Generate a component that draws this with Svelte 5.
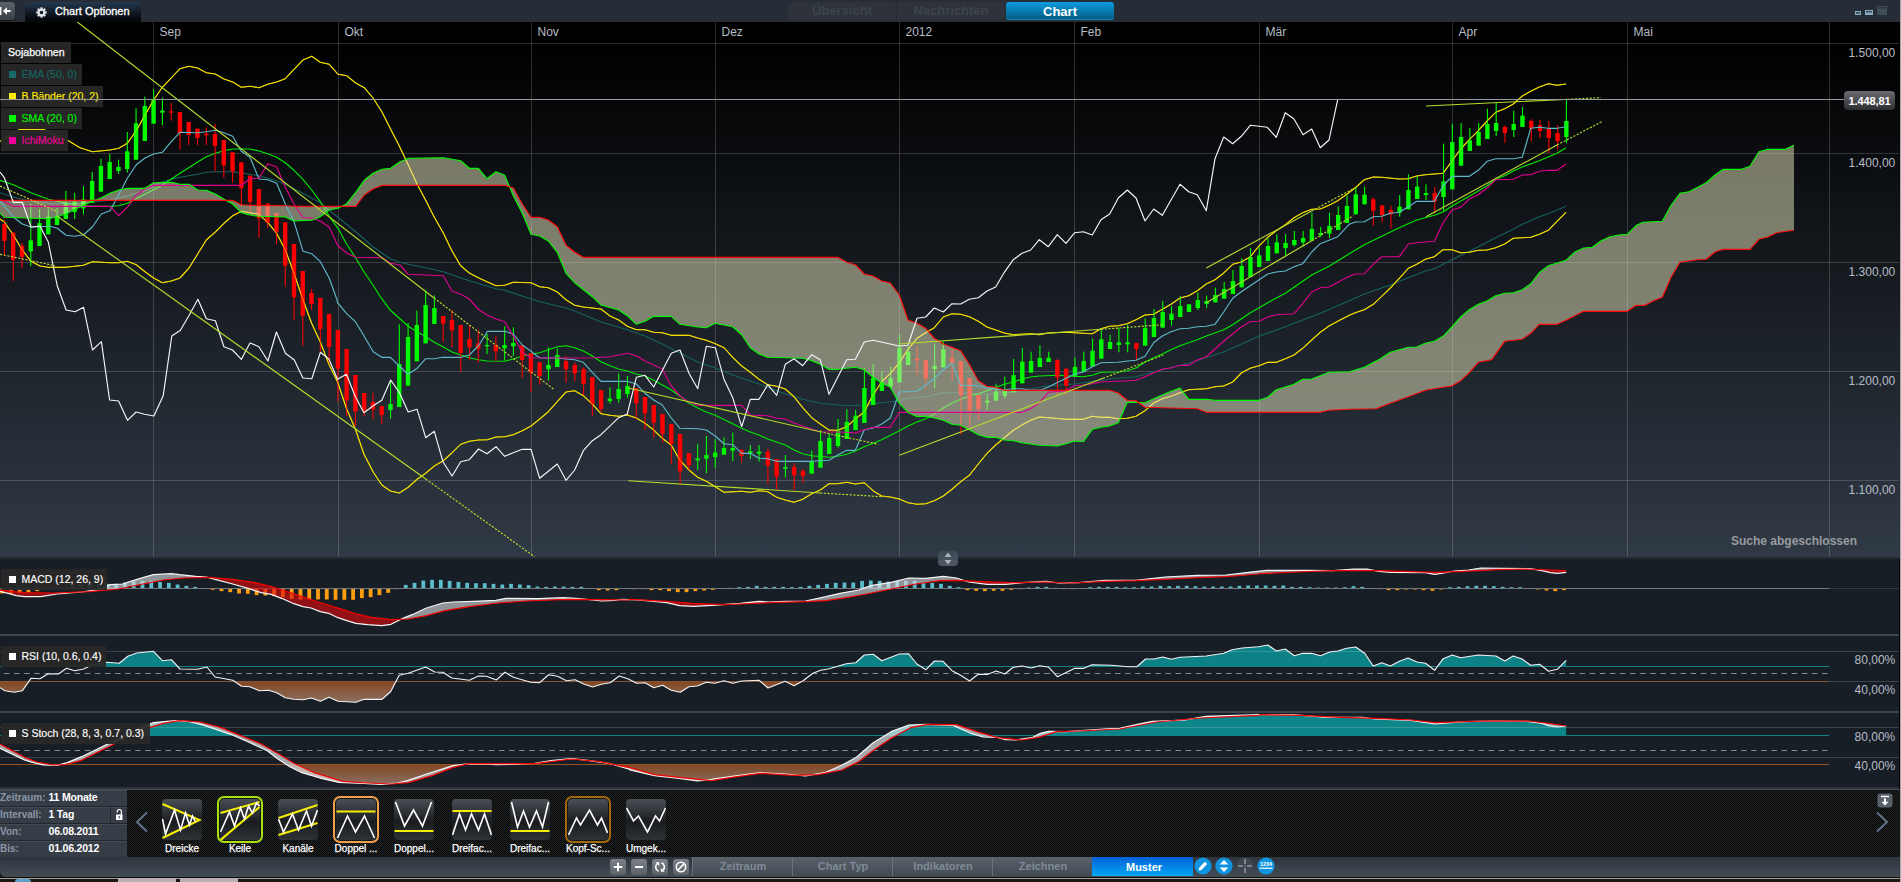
<script>
  // Plot sections: left edge, top edge, horizontal units per pixel (vertical is always 3).
  const sections = {
    A: [0, 0, 3], B: [400, 100, 3], C: [0, 200, 2.8], D: [850, 180, 3], E: [1150, 60, 3], F: [1500, 0, 3],
    G: [0, 540, 2.45], H: [630, 540, 2.45], I: [1260, 540, 2.446]
  };
  const trace = (parts) =>
    Object.entries(parts)
      .flatMap(([k, s]) => {
        const [ox, oy, sx] = sections[k];
        return s.trim().split(/\s+/).map((p) => {
          const [x, y] = p.split(',').map(Number);
          return [+(ox + x / sx).toFixed(1), +(oy + y / 3).toFixed(1)];
        });
      });
  const line = (pts) => 'M' + pts.map((p) => p.join(' ')).join('L');
  const closeTo = (pts, y) => line(pts) + `L${pts[pts.length - 1][0]} ${y}L${pts[0][0]} ${y}Z`;
  const barX = (i) => 4.4 + 8.775 * i;

  const upperBand = trace({
    A: '0,424 20,412 60,388 130,388 205,422 240,443 277,455 330,450 356,445 382,430 410,390 435,345 461,300 487,262 540,206 567,199 593,204 619,218 646,222 672,237 698,246 724,262 750,259 777,263 803,253 830,246 856,236 882,208 909,180 935,169 961,187 988,193 1014,223 1040,227 1067,249 1093,263 1119,294 1146,336 1172,388 1198,438',
    B: '25,195 51,252 77,301 103,352 130,399 156,453 182,497 208,519 235,533 261,545 288,557 314,556 340,547 393,548 419,560 445,563 472,576 498,599 524,616 550,621 603,627 630,648 656,660 682,679 709,689 735,689 761,697 787,698 814,706 867,706 893,714 919,721 946,731 972,743 998,772 1025,798 1051,817 1077,838 1103,854 1130,859 1156,867 1182,890 1208,923 1235,953 1261,972 1287,990 1313,991 1340,980 1366,957 1393,935 1419,885 1445,845 1471,821',
    D: '148,548 174,508 201,475 227,458 253,443 280,411 306,401 332,403 358,410 385,424 411,441 437,450 463,459 490,464 542,461 568,464 595,459 648,457 700,460 727,461 753,446 779,439 805,437 832,431 858,419 885,405 911,403 937,388 963,373 990,354 1016,347 1042,332 1069,312 1095,299 1121,279 1148,253 1174,246 1200,231 1227,198 1253,172 1279,152 1306,134 1332,113 1358,98 1385,88 1411,87 1437,76 1463,62 1490,43',
    E: '616,383 643,359 670,351 695,352 748,357 775,356 800,348 826,344 879,340 906,303 932,267 958,239 985,212 1011,183 1037,157 1064,146 1090,132 1117,108 1142,94 1168,81 1195,71 1221,76 1248,72'
  });
  const lowerBand = trace({
    A: '0,657 13,666 40,705 67,750 93,784 120,798 145,802 198,802 250,796 277,785 330,788 356,788 382,784 409,794 435,815 461,834 487,848 514,843 540,834 567,804 593,762 619,720 646,696 672,670 698,647 724,634 750,638 777,643 803,667 830,700 856,750 882,820 909,899',
    C: '872,368 897,427 921,493 945,545 970,625 995,688 1019,762 1045,816 1069,855 1093,873 1118,879 1143,862 1168,838 1192,820 1216,798 1240,783 1266,758 1290,733 1314,724 1340,720 1365,719',
    B: '288,1011 314,1010 340,1004 367,992 393,978 419,957 445,935 472,905 498,876 524,872 550,887 577,912 603,941 630,946 656,949 682,945 709,954 735,970 761,990 787,1015 814,1036 840,1081 867,1110 893,1132 919,1144 946,1160 972,1177 1025,1174 1051,1177 1077,1172 1103,1175 1130,1192 1156,1200 1182,1207 1208,1198 1235,1181 1261,1170 1287,1151 1313,1151 1340,1147 1366,1152 1393,1148 1419,1172 1445,1188 1471,1191 1498,1197',
    D: '174,968 201,973 227,971 253,962 280,948 306,928 332,905 358,886 385,852 411,820 437,795 463,773 490,751 516,735 542,721 568,711 595,713 648,718 700,718 727,709 753,712 779,712 805,716 832,715 858,709 885,692 911,669 937,656 963,649 990,638 1016,629 1069,626 1095,620 1121,618 1148,606 1174,579 1200,565 1227,557 1253,547 1279,547 1306,536 1332,525 1358,505 1385,480 1411,457 1437,438 1463,424 1498,406',
    E: '616,758 643,749 670,733 695,709 721,684 748,655 775,625 800,613 826,598 853,590 879,569 906,569 932,578 958,577 985,571 1011,570 1037,563 1064,552 1090,535 1117,533 1142,532 1168,523 1195,511 1221,484 1248,457'
  });
  const ema = trace({
    A: '0,578 40,591 67,598 93,602 160,612 250,610 330,600 382,588 435,572 461,558 487,545 540,532 593,523 619,517 646,515 698,515 724,519 777,527 830,542 856,553 909,580 961,608 1014,652 1067,695 1119,740 1172,777 1198,786',
    B: '25,493 77,503 130,515 208,542 288,566 314,571 419,605 498,624 524,633 603,666 682,689 735,708 787,732 840,759 893,786 946,804 998,825 1077,852 1156,882 1208,898 1261,910 1340,917 1393,915 1445,908 1498,902',
    D: '174,655 227,650 280,638 332,638 400,643 450,640 490,635 590,618 674,612 779,597 858,590 911,575 1016,550 1121,516 1227,469 1306,440 1411,400 1498,362',
    E: '643,702 721,675 775,653 826,633 853,626 906,599 985,560 1037,533 1090,508 1117,493 1168,470 1195,461 1248,439'
  });
  const sma = trace({
    A: '0,541 40,554 93,578 145,598 198,609 225,615 277,619 330,619 356,617 382,610 435,583 487,555 540,520 593,486 619,470 646,460 672,452 698,447 750,447 777,453 803,461 830,472 856,488 882,511 909,538 935,570 961,605 988,649 1014,685 1040,733 1067,774 1093,817 1119,855 1140,889',
    C: '1069,296 1093,331 1118,355 1143,379 1168,395 1192,410 1216,427 1240,440 1266,456 1290,465 1314,473 1340,479',
    B: '261,783 314,784 340,777 367,768 393,763 419,758 445,749 472,740 498,737 524,743 550,753 577,768 603,785 630,797 656,807 682,813 709,822 735,828 761,841 787,855 814,870 840,889 867,910 893,924 919,936 946,946 1025,985 1051,996 1077,1005 1103,1017 1156,1035 1182,1050 1208,1061 1235,1067 1287,1072 1313,1069 1340,1063 1366,1053 1393,1040 1445,1019 1498,992',
    D: '174,738 201,726 227,716 253,702 280,684 306,669 332,658 358,649 385,641 411,632 437,622 463,613 490,606 516,597 542,591 568,588 622,586 700,590 727,586 753,577 805,576 832,572 858,564 885,546 911,533 937,522 963,509 990,497 1042,479 1069,468 1121,449 1148,434 1200,399 1253,368 1306,340 1332,322 1385,285 1437,259 1498,221',
    E: '643,554 695,529 748,503 775,491 800,480 853,466 879,456 906,438 958,409 1011,377 1037,358 1064,347 1090,333 1117,321 1168,302 1221,280 1248,263'
  });
  const tenkan = trace({
    A: '0,604 13,618 40,651 67,672 93,681 150,679 172,685 198,706 225,709 251,704 277,681 304,642 330,632 356,585 382,535 409,494 435,474 461,462 487,457 514,425 540,397 593,398 619,395 646,391 672,398 698,409 724,454 750,472 777,537 803,539 830,550 856,612 882,665 909,754 935,761 961,785 988,835 1011,899',
    C: '945,308 970,340 995,365 1019,407 1045,455 1069,472 1093,472 1118,498 1143,523 1168,505 1192,476 1216,476 1240,472 1290,472 1314,465 1340,437 1365,394 1414,394',
    B: '340,702 367,735 393,754 419,774 472,774 498,777 524,779 550,787 577,817 603,844 682,844 709,852 735,880 761,900 787,915 814,954 840,985 893,986 919,990 946,1008 972,1031 998,1034 1025,1060 1051,1060 1077,1075 1103,1076 1130,1084 1235,1084 1287,1081 1313,1065 1340,1051 1366,1051 1393,989 1419,984 1445,972 1471,954 1498,876',
    D: '201,634 227,615 253,596 280,569 306,549 332,616 385,617 411,624 463,629 490,626 516,626 542,631 575,629 595,621 648,595 674,582 700,576 727,560 753,548 805,547 832,543 858,541 885,529 911,488 937,468 963,455 990,446 1016,445 1042,440 1069,439 1095,433 1121,396 1148,355 1174,335 1253,282 1279,276 1306,273 1332,260 1358,251 1385,216 1411,191 1437,181 1463,170 1498,133',
    E: '616,486 643,485 670,470 695,469 721,460 748,457 775,440 800,424 853,424 879,378 906,349 958,349 985,331 1011,304 1037,296 1090,296 1117,292 1142,205 1168,202 1195,205 1221,205 1248,200'
  });
  const kijun = trace({
    A: '0,598 40,619 330,619 356,647 382,622 409,585 435,567 461,556 724,556 750,536 777,535 803,491 830,501 856,562 882,612 909,653 935,654 961,663 988,682 1014,738 1040,759 1067,772 1146,773 1172,790 1200,795',
    B: '25,523 130,527 156,573 182,583 208,597 235,628 261,645 288,657 314,665 340,708 367,757 393,773 550,774 577,773 630,770 656,765 682,760 709,767 735,783 761,795 787,807 814,858 840,888 867,907 893,916 1025,916 1051,945 1103,947 1130,955 1156,957 1182,969 1235,987 1261,995 1340,997 1366,999 1393,989 1419,982 1471,982 1498,937',
    D: '516,697 542,686 568,668 595,637 648,632 674,617 700,615 727,611 753,606 832,602 858,601 885,590 911,578 937,567 963,564 990,556 1016,556 1042,540 1069,530 1121,484 1174,441 1200,425 1227,424 1253,411 1279,404 1332,401 1358,371 1385,336 1411,323 1437,321 1498,289',
    E: '616,642 643,641 670,613 695,590 748,590 775,552 800,548 853,544 879,489 906,450 932,442 958,417 985,404 1011,384 1037,359 1090,358 1117,345 1142,344 1168,334 1195,331 1221,331 1248,312'
  });
  const chikou = trace({
    A: '0,516 13,533 40,607 67,607 93,681 120,679 145,726 160,800 172,858',
    C: '185,330 210,335 234,322 259,450 284,425 307,600 332,603 357,661 381,636 405,643 431,648 457,587 481,408 505,391 530,345 554,298 578,356 603,362 627,440 651,450 676,478 700,429 725,440 750,483 774,396 799,460 824,480 848,534 873,536 897,457 921,477 945,538 970,523 995,590 1019,638 1045,617 1069,601 1094,540 1118,577 1143,636 1168,628 1192,713 1216,694 1240,785 1266,828 1290,785 1314,779 1340,747',
    B: '261,1061 288,1040 314,1069 340,1058 367,1048 393,1048 419,1135 472,1092 498,1141 524,1110 550,1052 577,1022 603,1004 656,953 682,942 709,832 735,826 761,861 814,760 840,750 867,820 893,866 919,739 946,743 972,838 998,893 1025,980 1051,898 1077,898 1103,854 1130,886 1156,793 1182,776 1208,797 1235,764 1261,779 1287,883 1340,779 1366,778 1393,726 1419,721 1498,738',
    D: '174,496 201,415 227,411 253,384 280,396 306,371 332,372 358,358 385,353 411,333 437,321 463,277 490,239 516,220 542,210 568,179 595,200 622,164 648,190 674,158 700,155 727,165 753,119 779,102 805,54 832,30 858,54 885,123 911,87 937,106 990,13 1016,35 1042,44 1069,92',
    E: '195,296 221,231 248,251 274,229 301,196 352,202 379,232 406,158 432,177 459,224 485,207 511,263 537,240 563,119'
  });
  const spanA = trace({
    A: '0,639 13,652 145,656 172,650 198,641 225,628 251,615 277,604 304,593 330,580 356,570 382,565 435,565 461,548 514,547 540,553 567,553 593,570 619,571 646,582 672,598 698,612 724,638 750,645 777,649 856,651 882,663 935,661 961,650 988,630 1014,625 1040,611 1067,577 1093,541 1119,520 1146,508 1172,505 1198,487',
    B: '25,175 130,173 182,182 208,205 235,205 261,236 288,215 314,226 340,287 367,340 393,403 419,408 445,423 472,457 498,520 524,548 577,590 603,615 656,630 682,647 709,673 735,664 761,649 814,649 840,673 893,681 919,683 946,670 998,680 1025,704 1051,743 1077,762 1103,772 1208,775 1235,782 1261,793 1287,808 1313,808 1366,802 1393,809 1419,832 1445,848 1471,862',
    D: '148,670 174,697 201,710 227,709 253,714 280,721 306,733 332,736 358,749 385,764 411,772 437,772 463,780 490,782 516,788 568,796 622,798 648,791 674,783 700,785 727,748 753,742 779,738 805,728 832,667 885,668 911,656 937,645 963,634 990,624 1016,658 1069,658 1095,661 1227,661 1253,652 1279,629 1306,621 1332,613 1358,598 1385,597 1411,587 1437,577 1498,575',
    E: '643,922 690,897 721,877 775,862 800,861 826,850 853,844 879,829 906,801 932,771 958,749 985,733 1011,723 1037,707 1064,700 1090,698 1117,689 1142,672 1168,638 1195,617 1248,601',
    F: '225,756 251,744 277,742 304,722 330,710 356,705 382,703 409,676 430,667 487,664 514,615 540,580 567,575 593,562 619,548 646,524 670,508 724,508 750,499 777,455 803,448 856,448 882,436'
  });
  const spanB = trace({
    A: '0,601 698,601 724,614 750,616 860,617 882,619 1067,619 1093,585 1119,567 1146,556 1200,556',
    B: '314,256 340,264 367,312 393,352 419,352 445,360 472,380 498,436 524,457 550,472 1313,472 1340,487 1366,494 1393,522 1419,528 1445,543 1471,549 1498,585',
    D: '174,420 201,430 227,445 253,475 280,492 306,502 332,512 358,553 385,602 411,619 437,622 463,631 779,631 805,639 832,661 858,662 885,682 1042,686 1069,697 1411,697 1437,691 1498,688',
    E: '678,1046 721,1030 775,1010 826,991 879,982 906,978 932,962 958,938 985,907 1025,899 1064,844 1117,838 1142,820 1168,793 1221,793 1248,781',
    F: '251,934 382,934 409,916 435,916 461,902 487,892 514,830 540,787 593,779 619,778 646,755 670,748 750,748 777,718 803,711 830,698 882,691'
  });
  const cloud = line([...spanA, ...[...spanB].reverse()]) + 'Z';

  // Candles: direction, body top, body bottom, high, low, listed per section from its first bar.
  const candleSets = [
    [0, 0, 'r672,723,660,768 r698,779,696,843 r738,771,729,804 g721,754,612,798 g669,738,627,738 g650,703,627,703 g648,675,624,675 g610,657,573,657 g606,636,579,657 g598,625,558,643 g543,608,516,608 g498,575,476,575 g486,537,462,537 g501,513,479,522 g454,507,396,518 g370,479,325,479 g318,423,290,423 g298,371,268,371 g332,338,293,375 r334,338,309,362 r336,400,336,449 r366,405,366,435 r386,414,386,435 r401,406,382,435 r402,438,372,514 r420,496,420,533 r457,514,457,548 r487,565,487,618 r527,606,527,637 r567,655,567,713 r611,668,611,683 r639,697,639,733 r667,797,667,860'],
    [33, 200, 'r132,292,132,360 r213,347,213,437 r279,312,267,330 r294,388,294,455 r342,441,342,490 r390,506,390,604 r447,601,447,648 r525,634,525,678 r579,633,579,648 r606,628,579,657 r618,645,618,671 g612,630,542,656 g492,621,373,621 g411,557,369,557 g375,484,332,484 g315,430,271,430 g324,372,286,372 r348,371,348,426 r360,391,330,443 r375,459,375,515 r417,442,375,480 r430,447,390,488'],
    [55, 100, 'g735,739,702,762 r735,754,709,783 g735,745,679,781 g729,739,682,768 r736,780,736,833 r760,819,760,875 r787,828,787,854 g795,808,742,842 g765,801,745,801 r783,808,768,848 r795,820,787,843 r807,852,802,885 r831,912,831,947 r870,927,870,938 g896,903,862,911 g867,897,820,908 g858,882,828,893 r864,910,864,958 r891,940,891,990 r915,968,915,1014 r942,1002,942,1028 r972,1032,972,1091 r1002,1114,1002,1151 r1059,1096,1059,1110 g1075,1081,1032,1110 g1065,1076,1008,1120 g1058,1071,1018,1103 g1044,1064,1012,1064 g1044,1052,998,1083 r1049,1068,1049,1088 g1054,1060,1035,1077 g1055,1061,1035,1085 r1055,1097,1046,1153 r1077,1130,1077,1169 g1101,1106,1065,1132 r1101,1126,1090,1170 r1113,1128,1106,1149 g1083,1121,1052,1121 g1023,1103,990,1103 g1014,1062,1000,1062 g992,1038,957,1043 g966,1017,928,1017 g947,990,930,990 g864,969,804,969 g834,915,792,915 g847,873,813,873 g835,860,799,866'],
    [102, 180, 'g503,607,464,607 g515,555,500,555 r535,542,499,585 r540,595,540,627 g558,567,491,624 g508,562,485,562 r535,550,505,602 r543,645,543,764 r594,691,594,740 r645,687,645,720 g662,668,643,690 g635,662,611,662 g630,648,590,655 g585,637,537,637 g545,610,504,610 g543,578,515,578 g534,561,496,561 g533,546,515,546 r540,593,537,645 r566,617,566,645 g561,590,533,590 g543,576,515,576 g512,560,476,560 g478,536,446,536 g486,507,464,507 g487,495,443,517 g487,493,435,517 r489,507,489,540 g444,497,415,497 g414,471,387,471 g396,443,363,443 g401,420,378,437 g378,411,348,411 g373,396,373,396 g360,384,338,390 g363,372,347,384 g345,367,323,367 g327,356,306,356 g303,342,270,342 g258,322,235,322 g231,291,204,291 g226,261,203,261 g198,243,174,243 g187,220,163,220 g189,204,162,228 g180,195,153,200 g174,187,153,200 g147,182,98,182 g159,165,141,171 g138,161,98,174 g105,150,79,150 g78,129,46,129'],
    [154, 60, 'g403,463,382,463 g404,433,380,433 r418,452,412,496 r436,465,436,486 r450,463,437,506 g440,458,405,470 g390,448,343,448 g380,417,349,417 g399,405,373,420 r399,424,381,461 g364,411,251,453 g246,388,192,388 g231,317,189,317 g241,273,204,273 g216,257,189,257 g192,237,146,237 g189,213,128,228 r201,219,196,249 g192,210,152,231 g167,201,141,201 r183,206,178,243 r196,213,180,234 r207,234,183,279 r219,243,195,268 g183,231,118,250']
  ];
  const candles = candleSets.flatMap(([first, top, s]) =>
    s.split(' ').map((c, k) => {
      const [bt, bb, hi, lo] = c.slice(1).split(',').map((v) => top + v / 3);
      return { x: barX(first + k), up: c[0] === 'g', bt, bb, hi, lo };
    })
  );

  // Trend lines: start, end of the solid part, end of the dashed projection.
  const trends = [
    [77.3, 22, 434, 298, 554, 389.5],
    [57, 216, 425.7, 479, 534.6, 556.7],
    [628.3, 388, 820, 431.7, 878.3, 444.3],
    [628.3, 480.7, 820, 493, 881.7, 496.7],
    [899.3, 344, 1101, 329.3, 1164, 324.7],
    [899.3, 455.3, 1103, 378.3, 1163.3, 355],
    [1206.3, 268, 1311.7, 211, 1355, 187.7],
    [1206.3, 302.7, 1311.7, 240.7, 1353.3, 215.7],
    [1426, 106, 1560, 99.7, 1601, 97.7],
    [1426, 216.7, 1557, 145, 1603, 121]
  ];

  const months = [['Sep', 153.5], ['Okt', 338.5], ['Nov', 531.5], ['Dez', 715.5], ['2012', 899.5], ['Feb', 1074.5], ['Mär', 1259.5], ['Apr', 1452.5], ['Mai', 1627.5], ['', 1829.5]];
  const prices = [['1.500,00', 43.5], ['1.400,00', 153.5], ['1.300,00', 262.5], ['1.200,00', 371.5], ['1.100,00', 480.5]];

  const histogram = [-14, -15, -13, -11, -7, -3, 0, 3, 6, 9, 10, 11, 13, 13, 17, 20, 22, 22, 19, 16, 11, 7, 4, 0, -3, -7, -10, -14, -15, -19, -20, -22, -25, -30, -32, -32, -32, -32, -33, -33, -33, -28, -25, -19, -12, -1, 10, 16, 23, 25, 25, 22, 19, 16, 15, 15, 13, 11, 13, 11, 9, 5, 4, 5, 5, 4, 4, 0, -4, -5, -4, 0, -1, -1, -4, -4, -7, -10, -10, -7, -5, -3, 0, 1, 3, 4, 7, 4, 4, 4, 3, 4, 7, 10, 13, 16, 17, 17, 22, 23, 22, 20, 22, 22, 22, 17, 16, 13, 7, 3, -4, -6, -7, -6, -6, -3, -1, 2, 4, 4, 1, -1, -1, 0, 3, 4, 4, 4, 3, 3, 5, 5, 7, 6, 7, 7, 6, 5, 5, 5, 5, 7, 8, 8, 8, 7, 8, 4, 4, 3, 2, 2, 2, 3, 6, 4, 0, -1, -4, -4, -2, -2, -4, -6, -2, 3, 4, 6, 7, 7, 6, 4, 3, 3, 0, -2, -5, -7, -4];
  const macd = trace({
    G: '0,154 20,160 40,167 60,170 100,170 140,162 200,156 240,149 270,134 300,132 320,124 350,113 376,104 420,101 440,104 480,109 505,111 527,118 570,132 610,146 640,158 665,163 690,175 720,191 742,200 762,204 785,215 805,220 828,233 850,242 872,250 900,254 935,257 958,253 985,236 1010,224 1045,204 1085,189 1110,186 1160,184 1215,181 1240,175 1320,176 1380,173 1420,176 1475,183 1505,181 1525,178 1560,180',
    H: '40,182 90,188 122,197 155,199 200,196 270,190 315,184 340,186 380,184 430,183 480,170 515,160 560,150 590,137 640,127 683,114 725,115 768,109 800,114 830,126 875,133 920,133 960,128 1020,124 1050,129 1100,128 1165,121 1240,121 1310,111 1390,106 1460,105 1515,97 1560,91',
    I: '30,91 110,91 180,92 230,87 262,87 290,94 320,97 405,98 427,103 450,99 475,93 510,90 540,84 660,86 690,92 710,98 728,100 749,97'
  });
  const signal = trace({
    G: '0,150 60,158 130,159 220,155 290,147 350,132 400,120 450,114 510,112 570,118 620,127 665,140 700,153 740,170 780,186 830,205 870,221 910,232 960,239 1000,237 1045,227 1090,212 1150,200 1220,189 1290,183 1370,179 1420,178 1540,180',
    H: '0,178 90,184 150,190 230,194 270,192 340,188 430,185 480,182 530,173 580,162 640,147 700,132 760,122 800,121 850,124 930,128 1020,126 1080,129 1165,124 1240,122 1310,118 1390,113 1460,110 1540,102',
    I: '0,101 90,96 180,92 290,92 350,94 430,97 500,94 580,89 650,87 710,90 749,92'
  });
  const rsi = trace({
    G: '0,443 12,452 35,457 55,452 76,415 98,416 118,401 143,402 163,385 183,392 205,387 225,375 262,367 292,370 313,349 335,339 376,334 398,362 420,359 441,387 484,388 507,381 527,411 570,421 592,439 612,440 635,452 658,451 678,458 699,473 720,478 742,479 763,474 785,484 806,472 828,484 872,487 892,478 936,478 957,455 978,406 1000,400 1043,381 1065,396 1085,397 1107,414 1150,421 1172,408 1192,409 1216,420 1237,397 1258,412 1300,427 1322,428 1344,404 1366,409 1388,422 1409,419 1430,432 1452,441 1473,433 1495,428 1517,408 1538,416 1560,430',
    H: '37,428 58,443 80,436 101,451 123,457 144,440 165,438 187,427 208,430 230,422 252,430 274,423 316,421 338,444 380,424 402,437 424,422 448,400 467,391 488,386 530,371 553,368 574,345 596,343 617,362 660,342 682,341 703,372 725,389 746,363 767,364 789,392 810,406 832,423 853,403 877,403 897,393 918,402 939,382 961,378 983,384 1004,377 1026,382 1047,410 1090,385 1112,385 1132,374 1180,376 1220,380 1242,380 1263,357 1284,357 1305,351 1326,358 1348,352 1412,348 1455,340 1475,329 1500,324 1540,320',
    I: '19,315 40,333 62,327 84,347 105,340 126,340 148,347 170,336 190,333 212,325 234,321 256,340 277,378 298,368 319,378 341,364 362,354 384,366 405,370 427,391 448,356 470,345 491,353 534,345 577,348 599,363 619,348 641,357 662,376 684,373 706,394 727,388 749,361'
  });
  const stochK = trace({
    G: '0,625 60,660 75,666 105,675 140,676 165,668 200,650 250,620 300,590 350,560 376,548 430,542 465,545 500,556 565,583 610,607 655,632 680,656 710,680 740,698 790,716 830,727 890,730 935,733 975,729 1000,721 1060,696 1110,677 1140,672 1190,672 1215,674 1250,673 1310,670 1350,662 1400,656 1440,661 1495,671 1540,687',
    H: '0,690 60,707 120,715 165,723 200,718 250,709 320,698 380,702 430,708 480,697 520,675 555,652 595,609 640,575 683,555 725,553 790,556 835,580 865,591 900,592 920,599 945,600 985,593 1005,580 1025,574 1070,575 1160,567 1200,565 1240,554 1280,544 1360,540 1410,529 1540,524',
    I: '0,524 80,524 150,531 250,532 280,537 370,541 427,552 500,545 570,543 655,544 690,550 705,557 727,561 749,558'
  });
  const stochD = trace({
    G: '0,612 60,652 90,666 130,675 160,674 200,661 250,630 300,600 366,563 400,550 440,542 490,546 540,562 600,592 640,612 680,640 720,670 770,698 840,724 900,729 960,732 1000,728 1060,706 1110,682 1150,671 1310,671 1400,657 1470,665 1530,680',
    H: '0,683 60,704 120,712 200,722 250,712 320,700 400,706 460,704 520,690 560,665 600,628 640,595 690,562 730,553 800,554 850,575 900,593 960,600 1000,592 1045,575 1100,573 1200,567 1290,546 1400,534 1540,526',
    I: '0,524 100,526 200,532 300,536 370,540 430,548 550,543 655,543 700,549 749,558'
  });
  const stochBetween = line([...stochK, ...[...stochD].reverse()]) + 'Z';

  const legend = [
    { text: 'EMA (50, 0)', color: '#176866', w: 81 },
    { text: 'B Bänder (20, 2)', color: '#ffed00', w: 102 },
    { text: 'SMA (20, 0)', color: '#00f400', w: 81 },
    { text: 'IchiMoku', color: '#f0009a', w: 67 }
  ];

  const patterns = [
    { name: 'Dreicke', yellow: 'M1 5L38 21L1 39', white: 'M1 20L4 35L13 11L19 31L24 14L28 26L31 17L34 23', frame: '' },
    { name: 'Keile', yellow: 'M1 14L40 3M1 41L40 8', white: 'M1 33L10 13L15 27L21 9L25 20L29 7L33 14L37 4L40 7', frame: 'lime' },
    { name: 'Kanäle', yellow: 'M1 19L40 6M1 36L40 24', white: 'M1 20L6 33L15 15L21 31L29 12L34 27L40 11', frame: '' },
    { name: 'Doppel ...', yellow: 'M1 12.5H40', white: 'M2 39L12 17L20 33L29 17L39 39', frame: 'orange' },
    { name: 'Doppel...', yellow: 'M1 32H40', white: 'M2 3L11 27L20 11L29 27L38 3', frame: '' },
    { name: 'Dreifac...', yellow: 'M1 12H40', white: 'M1 36L8 15L14 31L20 15L27 31L33 15L40 36', frame: '' },
    { name: 'Dreifac...', yellow: 'M1 32H40', white: 'M2 3L8 28L14 12L20 28L27 12L33 28L39 3', frame: '' },
    { name: 'Kopf-Sc...', yellow: '', white: 'M1 36L9 19L13 26L22 11L30 26L34 19L40 34', frame: 'brown' },
    { name: 'Umgek...', yellow: '', white: 'M1 9L8 22L13 17L22 33L30 17L34 22L40 9', frame: '' }
  ];
  const modes = ['Zeitraum', 'Chart Typ', 'Indikatoren', 'Zeichnen', 'Muster'];
  const range = [['Zeitraum:', '11 Monate'], ['Intervall:', '1 Tag'], ['Von:', '06.08.2011'], ['Bis:', '01.06.2012']];
</script>

<div class="app">
  <header>
    <button class="collapse" aria-label="Collapse">
      <svg width="14" height="18" viewBox="0 0 14 18"><path d="M0.7 5V13" stroke="#fff" stroke-width="1.4" /><path d="M3 9L7 5.3V8H10.5V10H7V12.7Z" fill="#fff" /></svg>
    </button>
    <div class="options">
      <svg width="11" height="11" viewBox="-6 -6 12 12">
        {#each [0, 45, 90, 135] as a}<rect x="-1.3" y="-5.6" width="2.6" height="11.2" fill="#dfe3e8" transform="rotate({a})" />{/each}
        <circle r="4" fill="#dfe3e8" /><circle r="1.9" fill="#101720" />
      </svg>
      <span>Chart Optionen</span>
    </div>
    <nav><span>Übersicht</span><span>Nachrichten</span><span class="on">Chart</span></nav>
    <svg class="win" width="36" height="16" viewBox="1853 4 36 16">
      <rect x="1855" y="11" width="6" height="4" fill="#86adc0" /><rect x="1856" y="12.2" width="4" height="1.4" fill="#2b3640" />
      <rect x="1865" y="10" width="8" height="5" fill="#86adc0" /><rect x="1866" y="11.2" width="6" height="1.2" fill="#2b3640" />
      <rect x="1877" y="6" width="10" height="9" fill="#3d4e59" /><rect x="1878" y="7.2" width="8" height="1.2" fill="#27313a" />
    </svg>
  </header>

  <section class="price">
    <svg width="1901" height="535" viewBox="0 22 1901 535">
      {#each prices as [label, y]}
        <path d="M0 {y}H1899" class="grid" /><text x="1895.3" y={y + 13.8} text-anchor="end">{label}</text>
      {/each}
      {#each months as [label, x]}
        <path d="M{x} 22V557" class="grid" /><text x={x + 6} y="36">{label}</text>
      {/each}
      <path d={line(ema)} class="ln" stroke="#17625f" />
      <path d={line(upperBand)} class="ln" stroke="#f2dc00" />
      <path d={line(lowerBand)} class="ln" stroke="#f2dc00" />
      <path d={line(sma)} class="ln" stroke="#00ea00" />
      {#each candles as c}
        <g fill={c.up ? '#00fa00' : '#fb0000'}>
          <rect x={c.x - 0.5} y={c.hi} width="1.1" height={c.lo - c.hi} />
          <rect x={c.x - 2.2} y={c.bt} width="4.4" height={c.bb - c.bt} />
        </g>
      {/each}
      <path d={line(upperBand)} class="ln over" stroke="#f2dc00" />
      <path d={line(lowerBand)} class="ln over" stroke="#f2dc00" />
      <path d={cloud} fill="rgba(232,230,190,.5)" />
      <path d={line(tenkan)} class="ln" stroke="#5fb9c9" />
      <path d={line(kijun)} class="ln" stroke="#e0008e" />
      <path d={line(spanA)} class="ln" stroke="#00f800" />
      <path d={line(spanB)} class="ln" stroke="#ff0a0a" />
      <path d={line(chikou)} class="ln" stroke="#f4f6f8" />
      {#each trends as [x1, y1, x2, y2, x3, y3]}
        <path d="M{x1} {y1}L{x2} {y2}" class="ln" stroke="#b4da2c" />
        <path d="M{x2} {y2}L{x3} {y3}" class="ln dash" stroke="#b4da2c" />
      {/each}
      <path d="M0 186L57 211.5M0 254.3L55 265.7" class="ln dash" stroke="#c8dc30" />
      <text x="1731" y="545" class="status">Suche abgeschlossen</text>
    </svg>
    <ul class="legend">
      <li class="title">Sojabohnen</li>
      {#each legend as l}
        <li style:width="{l.w}px" style:color={l.color}><i></i>{l.text}</li>
      {/each}
    </ul>
    <div class="last-line"></div>
    <div class="last">1.448,81</div>
    <div class="grip"><svg width="16" height="15" viewBox="2 0.5 16 15"><path d="M10 2L13.5 6.6H6.5ZM10 14L6.5 9.4H13.5Z" fill="#aab0b8" /></svg></div>
  </section>

  <section class="panel">
    <svg width="1901" height="75" viewBox="0 559 1901 75">
      <defs>
        <clipPath id="aboveSignal"><path d={closeTo(signal, 559)} /></clipPath>
        <clipPath id="belowSignal"><path d={closeTo(signal, 634)} /></clipPath>
      </defs>
      {#each histogram as h, i}
        {#if h}
          <rect x={barX(i) - 4.2} y={h > 0 ? 588.2 - h / 3 : 588.8} width="3.8" height={Math.abs(h) / 3} fill={h > 0 ? '#5bbccb' : '#fd9d0f'} />
        {/if}
      {/each}
      <path d="M0 588.5H1829" stroke="#74787e" /><path d="M1829 588.5H1899" stroke="#333a43" />
      <path d={closeTo(macd, 634)} clip-path="url(#aboveSignal)" fill="rgba(225,225,228,.6)" />
      <path d={closeTo(macd, 559)} clip-path="url(#belowSignal)" fill="rgba(220,10,15,.62)" />
      <path d={line(macd)} class="ln thick" stroke="#f4f4f4" />
      <path d={line(signal)} class="ln thick" stroke="#f40000" />
    </svg>
    <div class="tag w107"><i></i>MACD (12, 26, 9)</div>
  </section>

  <section class="panel">
    <svg width="1901" height="75" viewBox="0 636 1901 75">
      <defs>
        <clipPath id="hi"><rect x="0" y="636" width="1901" height="30.5" /></clipPath>
        <clipPath id="lo"><rect x="0" y="681.5" width="1901" height="30" /></clipPath>
        <linearGradient id="rust" gradientUnits="userSpaceOnUse" x1="0" y1="681" x2="0" y2="704"><stop offset="0" stop-color="#824620" /><stop offset="1" stop-color="#8f7264" /></linearGradient>
      </defs>
      <path d={closeTo(rsi, 711)} clip-path="url(#hi)" fill="#0d8286" />
      <path d={closeTo(rsi, 636)} clip-path="url(#lo)" fill="url(#rust)" />
      <path d="M0 651.5H1899" class="grid" /><path d="M1829 681.5H1899" class="grid" />
      <path d="M0 666.5H1829" stroke="#128488" /><path d="M0 681.5H1829" stroke="#8c5233" />
      <path d="M4 673.5H1829" stroke="#868b92" stroke-dasharray="5.5 4.6" />
      <path d={line(rsi)} class="ln" stroke="#f0f2f4" />
      <text x="1895.3" y="664.3" text-anchor="end">80,00%</text><text x="1895.3" y="694.3" text-anchor="end">40,00%</text>
    </svg>
    <div class="tag w106"><i></i>RSI (10, 0.6, 0.4)</div>
  </section>

  <section class="panel lastpanel">
    <svg width="1901" height="74" viewBox="0 713 1901 74">
      <defs>
        <clipPath id="sHi"><rect x="0" y="713" width="1901" height="22.5" /></clipPath>
        <clipPath id="sLo"><rect x="0" y="764.5" width="1901" height="23" /></clipPath>
        <linearGradient id="rust2" gradientUnits="userSpaceOnUse" x1="0" y1="764" x2="0" y2="785"><stop offset="0" stop-color="#824620" /><stop offset="1" stop-color="#8a7066" /></linearGradient>
      </defs>
      <path d={closeTo(stochK, 787)} clip-path="url(#sHi)" fill="#0d8589" />
      <path d={closeTo(stochK, 713)} clip-path="url(#sLo)" fill="url(#rust2)" />
      <path d="M0 727.5H1899M0 757.5H1899" class="grid" />
      <path d="M0 735.5H1829" stroke="#128488" /><path d="M0 764.5H1829" stroke="#96511f" />
      <path d="M4 750.5H1829" stroke="#868b92" stroke-dasharray="5.5 4.6" />
      <path d={stochBetween} fill="rgba(225,225,228,.7)" />
      <path d={line(stochK)} class="ln thick" stroke="#f4f4f4" />
      <path d={line(stochD)} class="ln thick" stroke="#f40000" />
      <text x="1895.3" y="741.3" text-anchor="end">80,00%</text><text x="1895.3" y="770.3" text-anchor="end">40,00%</text>
    </svg>
    <div class="tag w150"><i></i>S Stoch (28, 8, 3, 0.7, 0.3)</div>
  </section>

  <footer>
    <div class="tools">
      <dl>
        {#each range as [k, v], i}
          <div><dt>{k}</dt><dd>{v}</dd>
            {#if i === 1}<span class="lock"><svg width="9" height="12" viewBox="0 0 9 12"><rect x="1" y="5.5" width="6.5" height="5.5" fill="#fff" /><path d="M2.2 3.5V2.6a2 2 0 0 1 4.2 0V6" fill="none" stroke="#fff" stroke-width="1.2" /><path d="M4.2 7V9.4" stroke="#333a43" /></svg></span>{/if}
          </div>
        {/each}
      </dl>
      <svg class="prev" width="14" height="22" viewBox="0 0 14 22"><path d="M12 1.5L2 11L12 20.5" fill="none" stroke="#63748a" stroke-width="2" /></svg>
      <div class="patterns">
        {#each patterns as p}
          <figure>
            <div class="tile {p.frame}">
              <svg width="40" height="41" viewBox="0.5 0 40 41"><path d={p.yellow} stroke="#f3ee00" stroke-width="2.1" fill="none" /><path d={p.white} stroke="#fff" stroke-width="1.6" fill="none" /></svg>
            </div>
            <figcaption>{p.name}</figcaption>
          </figure>
        {/each}
      </div>
      <div class="side">
        <svg width="16" height="15" viewBox="0 0 16 15"><rect x="0.5" y="0.5" width="15" height="14" rx="3" fill="#59616b" /><path d="M4 3.5H12" stroke="#fff" stroke-width="1.5" /><path d="M8 12.5L4.5 8.8H7V5.5H9V8.8H11.5Z" fill="#fff" /></svg>
        <svg class="next" width="14" height="22" viewBox="0 0 14 22"><path d="M2 1.5L12 11L2 20.5" fill="none" stroke="#63748a" stroke-width="2" /></svg>
      </div>
    </div>
    <div class="bar">
      <div class="small">
        <b><svg viewBox="0 0 16 16"><path d="M8 3.7V12.3M3.7 8H12.3" stroke="#fff" stroke-width="2" /></svg></b>
        <b><svg viewBox="0 0 16 16"><path d="M4 8H12" stroke="#fff" stroke-width="2" /></svg></b>
        <b><svg viewBox="0 0 16 16"><path d="M6.5 12.3A4.6 4.6 0 0 1 5 4.8M9.5 3.7A4.6 4.6 0 0 1 11 11.2" fill="none" stroke="#fff" stroke-width="1.6" /><path d="M3.2 3.2H7.2V7ZM12.8 12.8H8.8V9Z" fill="#fff" /></svg></b>
        <b><svg viewBox="0 0 16 16"><circle cx="8" cy="8" r="4.7" fill="none" stroke="#fff" stroke-width="1.6" /><path d="M4.9 11.1L11.1 4.9" stroke="#fff" stroke-width="1.6" /></svg></b>
      </div>
      <div class="modes">{#each modes as m}<span class:on={m === 'Muster'}>{m}</span>{/each}</div>
      <div class="round">
        <svg viewBox="0 0 18 18"><circle cx="9" cy="9" r="8.6" fill="#0f94e0" /><path d="M4.5 13.6L5.2 10.8L10.8 4.8L13.2 7L7.4 12.9Z" fill="#fff" /></svg>
        <svg viewBox="0 0 18 18"><circle cx="9" cy="9" r="8.6" fill="#0f94e0" /><path d="M9 3L13.2 7.6H4.8ZM9 15L4.8 10.4H13.2Z" fill="#fff" /></svg>
        <svg viewBox="0 0 18 18"><circle cx="9" cy="9" r="8.6" fill="#3f464f" /><path d="M9 2V7M9 11V16M2 9H7M11 9H16M8.5 9H9.5" stroke="#b5bac0" stroke-width="1.1" /></svg>
        <svg viewBox="0 0 18 18"><circle cx="9" cy="9" r="8.6" fill="#0f94e0" /><text x="9" y="8.8" text-anchor="middle" class="num">1234</text><path d="M2.5 11.2H15.5" stroke="#fff" stroke-width="1.2" /></svg>
      </div>
    </div>
    <div class="below"><i class="orb"></i><i class="task"></i><i class="task"></i></div>
  </footer>
</div>

<style>
  :global(body) { background: #000; overflow: hidden; }
  .app { width: 1901px; height: 882px; box-sizing: border-box; display: flex; flex-direction: column; background: #181e26; border-right: 1px solid #a5a5a8; box-shadow: inset -1px 0 #000; font-family: "Liberation Sans", Arial, sans-serif; overflow: hidden; }
  svg { display: block; }
  header { height: 22px; flex: none; position: relative; display: flex; align-items: flex-start; background: #272d36; }
  .collapse { width: 15px; height: 18px; margin: 2px 10px 0 0; padding: 0; border: 0; border-radius: 0 4px 4px 0; background: linear-gradient(#5d636a, #3a4047); box-shadow: 0 1px 2px #111; }
  .options { display: flex; align-items: center; gap: 8px; width: 105px; height: 20px; margin-top: 2px; padding-left: 11px; border-radius: 4px 4px 0 0; background: linear-gradient(#25384e, #05080c 85%); color: #fff; font-size: 11px; white-space: nowrap; -webkit-text-stroke: .3px #fff; }
  .options svg { margin-top: 1px; }
  .options span { line-height: 18px; height: 20px; }
  nav { display: flex; gap: 1px; margin: 2px 0 0 647px; }
  nav span { width: 108px; height: 18px; line-height: 17px; border-radius: 3px; text-align: center; font-weight: bold; font-size: 13px; background: #2e333b; color: #3d434c; }
  nav .on { line-height: 20px; color: #fff; background: linear-gradient(#0a9be0, #04597f); box-shadow: inset 0 -1px #1387b8; }
  .win { margin: 4px 0 0 739px; }
  .price { height: 535px; flex: none; position: relative; background: linear-gradient(#000 0, #000 4%, #303a46 100%); border-bottom: 2px solid #232a32; }
  .grid { stroke: rgba(255, 255, 255, .17); fill: none; }
  .ln { fill: none; stroke-width: 1.15; stroke-linejoin: round; }
  .over { stroke-width: .7; }
  .thick { stroke-width: 1.25; }
  .dash { stroke-dasharray: 2.2 1.5; }
  text { fill: #b6bcc6; font-size: 12px; }
  .status { fill: #999b9e; font-weight: bold; }
  .legend { position: absolute; left: 1px; top: 20px; margin: 0; padding: 0; list-style: none; display: flex; flex-direction: column; gap: 1px; }
  .legend li, .tag { box-sizing: border-box; height: 21px; padding: 0 0 1px 8px; display: flex; align-items: center; background: rgba(40, 40, 40, .95); font-size: 10.5px; white-space: nowrap; -webkit-text-stroke: .15px currentColor; }
  .legend .title { width: 70px; padding-left: 7px; color: #fff; font-size: 10.6px; -webkit-text-stroke: .25px #fff; }
  .legend i, .tag i { width: 7px; height: 7px; margin-right: 5.5px; background: currentColor; }
  .last-line { position: absolute; left: 0; top: 77px; width: 1845px; height: 1px; background: #98989d; }
  .last { position: absolute; left: 1844px; top: 69px; width: 51px; height: 19px; line-height: 20px; border-radius: 4px; text-align: center; color: #fff; font-weight: bold; font-size: 11px; letter-spacing: -.1px; background: linear-gradient(#6a6c70, #2c2d30); }
  .grip { position: absolute; left: 938px; top: 529px; width: 20px; height: 15px; z-index: 2; display: flex; justify-content: center; border-radius: 4px; background: linear-gradient(#3e4854, #4e5a69); }
  .panel { position: relative; flex: none; border-bottom: 2px solid #3c454e; background: #181e26; width: 1899px; }
  .lastpanel { border-bottom-color: #2c313a; }
  .tag { position: absolute; left: 1px; top: 10px; color: #fff; }
  .w107 { width: 106px; } .w106 { width: 105px; } .w150 { width: 149px; }
  footer { display: flex; flex-direction: column; flex: none; height: 93px; }
  .tools { display: flex; height: 67px; border-top: 1px solid #474c54; background: repeating-conic-gradient(#242527 0 25%, #050606 0 50%) 0 0 / 2px 2px; }
  dl { margin: 0 9px 0 0; width: 127px; background: #363d46; display: flex; flex-direction: column; }
  dl div { position: relative; display: flex; height: 16px; border-bottom: 1px solid #22272e; box-shadow: inset 0 1px #434b55; line-height: 15px; font-size: 10.5px; font-weight: bold; }
  dl div:last-child { border-bottom: 0; }
  dt { width: 48.5px; color: #8b96a5; font-size: 10px; }
  dd { margin: 0; color: #fff; letter-spacing: -.2px; }
  .lock { position: absolute; right: 0; top: 0; width: 16px; height: 16px; border-left: 1px solid #22272e; }
  .lock svg { margin: 2px 0 0 4px; }
  .prev { margin-top: 21px; margin-left: -1px; }
  .patterns { display: flex; margin: 6px 0 0 4px; }
  figure { width: 58px; margin: 0; display: flex; flex-direction: column; align-items: center; }
  .tile { width: 40px; height: 41px; margin-top: 3px; border-radius: 4px; background: linear-gradient(#4a4f56, #1a1c1f 55%, #2e3237); outline-offset: 1px; }
  .lime { outline: 2px solid #a8e010; }
  .orange { outline: 2px solid #f0a04c; }
  .brown { outline: 2px solid #a06a0c; }
  figcaption { margin-top: 3px; line-height: 12px; font-size: 10px; color: #fff; white-space: nowrap; -webkit-text-stroke: .25px #fff; }
  .side { margin-left: auto; padding: 3px 6px 0 0; display: flex; flex-direction: column; align-items: center; gap: 3px; }
  .next { margin-right: 5px; }
  .bar { height: 20px; display: flex; background: linear-gradient(#2e353e, #434b54); border-bottom-left-radius: 6px; }
  .small { display: flex; gap: 5px; padding: 2px 0 0 610px; width: 82px; }
  .small b { width: 16px; height: 16px; border-radius: 3px; background: linear-gradient(#7b8187, #5b6168); }
  .modes { display: flex; }
  .modes span { width: 100px; box-sizing: border-box; height: 19px; line-height: 18px; padding-left: 1px; text-align: center; font-weight: bold; font-size: 11px; color: #818a96; background: linear-gradient(#59616b, #424a53); border-left: 1px solid #6a727b; }
  .modes .on { width: 101px; border: 0; padding-left: 3px; line-height: 20px; color: #fff; background: linear-gradient(#0560d8, #03a6f4); }
  .round { display: flex; gap: 3px; margin-left: 1px; }
  .round svg { width: 18px; height: 18px; }
  .num { font-size: 5.5px; font-weight: bold; fill: #fff; }
  .below { height: 5px; display: flex; background: linear-gradient(#0a0a0b 0 1px, #a79f9c 1px 2px, #1a1714 2px); }
  .orb { width: 16px; height: 3px; margin: 2px 87px 0 15px; border-radius: 8px 8px 0 0; background: #5aa0c8; }
  .task { width: 58px; height: 4px; margin: 1px 4px 0 0; background: #b9afb2; }
</style>
